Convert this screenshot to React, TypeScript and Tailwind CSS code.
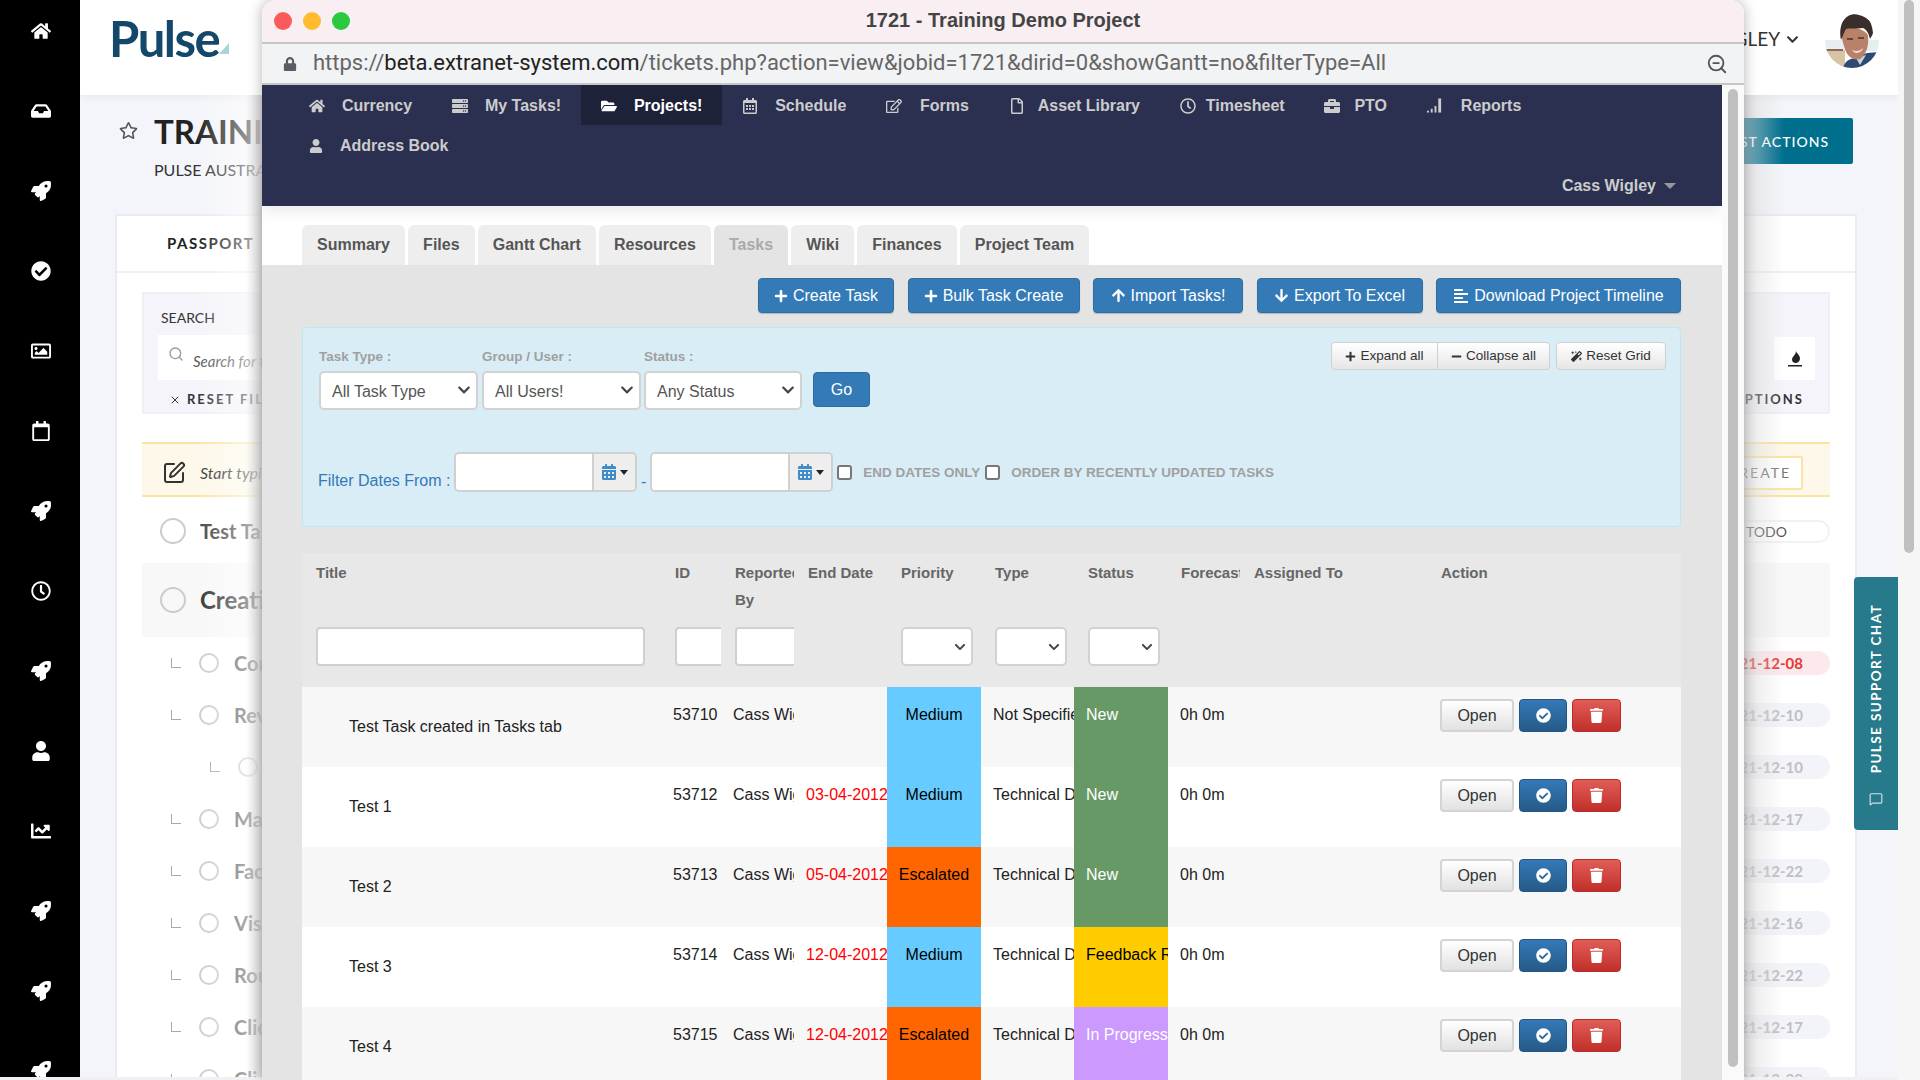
import {
  FaAlignLeft,
  FaArrowDown,
  FaArrowUp,
  FaBriefcase,
  FaCalendarAlt,
  FaChartLine,
  FaCheckCircle,
  FaChevronDown,
  FaFolderOpen,
  FaHome,
  FaInbox,
  FaLock,
  FaMagic,
  FaMinus,
  FaPlus,
  FaRegCalendar,
  FaRegCalendarAlt,
  FaRegClock,
  FaRegEdit,
  FaRegFile,
  FaRegImage,
  FaRegStar,
  FaRocket,
  FaServer,
  FaTrash,
  FaUser,
} from "react-icons/fa";
import { MessageSquare, Search, SquarePen, X, ZoomOut } from "lucide-react";
import type { ReactNode } from "react";

const sideIcons = [
  FaHome,
  FaInbox,
  FaRocket,
  FaCheckCircle,
  FaRegImage,
  FaRegCalendar,
  FaRocket,
  FaRegClock,
  FaRocket,
  FaUser,
  FaChartLine,
  FaRocket,
  FaRocket,
  FaRocket,
];

const subTasks = [
  { name: "Confirm", date: "2021-12-08", indent: false, late: true },
  { name: "Review", date: "2021-12-10", indent: false },
  { name: "Draft", date: "2021-12-10", indent: true },
  { name: "Map", date: "2021-12-17", indent: false },
  { name: "Facilitate", date: "2021-12-22", indent: false },
  { name: "Visit", date: "2021-12-16", indent: false },
  { name: "Route", date: "2021-12-22", indent: false },
  { name: "Client", date: "2021-12-17", indent: false },
  { name: "Client", date: "2021-12-29", indent: false },
];

const tabs = ["Summary", "Files", "Gantt Chart", "Resources", "Tasks", "Wiki", "Finances", "Project Team"];

const tasks = [
  { title: "Test Task created in Tasks tab", id: "53710", end: "", priority: "Medium", type: "Not Specified", status: "New" },
  { title: "Test 1", id: "53712", end: "03-04-2012", priority: "Medium", type: "Technical Design", status: "New" },
  { title: "Test 2", id: "53713", end: "05-04-2012", priority: "Escalated", type: "Technical Design", status: "New" },
  { title: "Test 3", id: "53714", end: "12-04-2012", priority: "Medium", type: "Technical Design", status: "Feedback Required" },
  { title: "Test 4", id: "53715", end: "12-04-2012", priority: "Escalated", type: "Technical Design", status: "In Progress" },
];

const priorityClass: Record<string, string> = {
  Medium: "bg-[#66ccff]",
  Escalated: "bg-[#ff6600]",
};

const statusClass: Record<string, string> = {
  New: "bg-[#669966] text-white",
  "Feedback Required": "bg-[#ffcc00] text-black",
  "In Progress": "bg-[#cc99ff] text-white",
};

const gridCols =
  "grid grid-cols-[359px_60px_73px_93px_94px_93px_94px_72px_187px_254px]";

function SignalIcon() {
  return (
    <svg width="17" height="17" viewBox="0 0 17 17" fill="currentColor">
      <rect x="0" y="14" width="2" height="2" />
      <rect x="4" y="12" width="2" height="4" />
      <rect x="8" y="9" width="2" height="7" />
      <rect x="12" y="1" width="3" height="15" />
    </svg>
  );
}

function Avatar() {
  return (
    <svg width="54" height="54" viewBox="0 0 54 54" className="rounded-full">
      <rect width="54" height="54" fill="#ffffff" />
      <rect x="0" y="26" width="54" height="11" fill="#e6eef2" />
      <rect x="0" y="36" width="20" height="18" fill="#d8c4a4" />
      <rect x="0" y="35" width="18" height="2" fill="#8c6a58" />
      <path d="M18 54c2-7 6-9 12-10l12-5 12-1v16z" fill="#2d4a70" />
      <path d="M31 44l4 7 6-10z" fill="#c9d3da" />
      <path d="M17 16c7-4 20-3 26 5 1 10-1 19-8 24-7 2-13-3-15-10-2-6-4-12-3-19z" fill="#b9806a" />
      <path d="M16 26C13 10 20 0 31 0c9 0 16 5 17 19-1 3-2 4-3 6-1-5-3-9-7-11-7 1-14 0-17 1-2 3-3 7-5 11z" fill="#3a2e2c" />
      <path d="M27 36c4 2 8 1 11-2-1 5-8 7-11 2z" fill="#f0dcd2" />
      <path d="M22 25h6M33 24h6" stroke="#40302c" strokeWidth="1.6" />
    </svg>
  );
}

function FlameIcon() {
  return (
    <svg width="14" height="16" viewBox="0 0 14 16" className="text-[#222]" fill="currentColor">
      <path d="M8 0c1 3 4 4 4 7.500 0 2.500-2 4.500-4.500 4.500-2 0-3.500-1.500-3.500-3.500 0-2 1.500-3 2.500-4.500C7 3 8 2 8 0z" />
      <rect x="0" y="14" width="14" height="1.500" />
    </svg>
  );
}

function BackgroundPage() {
  return (
    <div className="flex h-[1077px] w-[1898px] font-['Lato',sans-serif]">
      <aside className="flex h-full w-[80px] shrink-0 flex-col items-center overflow-hidden bg-black pl-[2px] text-white">
        <div className="-mt-[9px]">
          {sideIcons.map((Icon, i) => (
            <div key={i} className="flex h-[80px] items-center justify-center">
              <Icon className="size-[20px]" />
            </div>
          ))}
        </div>
      </aside>

      <main className="min-w-0 flex-1 overflow-hidden bg-[#f4f5fa]">
        <header className="flex h-[95px] items-center justify-between bg-white pl-[29px] pr-[19px] shadow-[0_2px_8px_rgba(0,0,0,0.06)]">
          <div className="mb-[18px] flex items-end">
            <span className="text-[49px] font-bold leading-none tracking-[-1.5px] text-[#14486a]">Pulse</span>
            <svg width="10" height="11" viewBox="0 0 10 11" className="mb-[9px]">
              <polygon points="10,0 10,11 0,11" fill="#a9d3d6" />
            </svg>
          </div>
          <div className="flex items-center gap-[6px]">
            <span className="mb-[16px] text-[19px] text-[#333]">CASS WIGLEY</span>
            <FaChevronDown className="mb-[16px] mr-[20px] size-[13px] text-[#333]" />
            <div className="mb-[14px]">
              <Avatar />
            </div>
          </div>
        </header>

        <section className="flex h-[119px] items-start justify-between pl-[39px] pr-[45px] pt-[23px]">
          <div className="flex">
            <FaRegStar className="mr-[16px] mt-[3px] size-[19px] text-[#555]" />
            <div>
              <h1 className="text-[33px] font-bold leading-[26px] text-[#222]">TRAINING DEMO PROJECT</h1>
              <p className="mt-[16px] text-[16px] leading-[20px] text-[#333]">PULSE AUSTRALIA</p>
            </div>
          </div>
          <button className="h-[46px] rounded-[2px] bg-[#006f8e] px-[24px] text-[14px] font-medium tracking-[1px] text-white">
            LATEST ACTIONS
          </button>
        </section>

        <section className="ml-[35px] h-[870px] w-[1742px] border-2 border-[#e9ebf3] bg-white">
          <div className="flex h-[57px] items-center border-b-2 border-[#eef0f5] pl-[50px]">
            <span className="text-[15px] font-bold tracking-[1.5px] text-[#222]">PASSPORT</span>
          </div>
          <div className="px-[25px] pt-[19px]">
            <div className="flex h-[122px] items-start justify-between border-2 border-[#efeff5] bg-[#f4f4fa] pl-[17px] pr-[24px] pt-[14px]">
              <div>
                <p className="text-[14px] leading-[20px] text-[#333]">SEARCH</p>
                <div className="mt-[7px] flex h-[45px] w-[500px] -translate-x-[3px] items-center bg-white pl-[10px]">
                  <Search className="mb-[8px] mr-[9px] size-[16px] text-[#999]" />
                  <span className="mt-[8px] text-[15px] italic text-[#555]">Search for tasks</span>
                </div>
                <p className="ml-[8px] mt-[10px] flex items-center text-[13px] font-bold tracking-[2px] text-[#333]">
                  <X className="mr-[6px] size-[12px]" /> RESET FILTERS
                </p>
              </div>
              <div className="flex flex-col items-end">
                <div className="mr-[-11px] mt-[29px] flex h-[43px] w-[41px] items-center justify-center bg-white">
                  <FlameIcon />
                </div>
                <span className="mt-[10px] text-[13px] font-bold tracking-[2px] text-[#333]">OPTIONS</span>
              </div>
            </div>

            <div className="mt-[28px] flex h-[55px] items-center justify-between border-y-2 border-[#fbe4a3] bg-[#fdf8ea] pl-[20px] pr-[27px]">
              <div className="flex items-center pt-[7px]">
                <SquarePen className="mr-[14px] size-[24px] text-[#333]" />
                <span className="text-[16px] italic text-[#333]">Start typing to add a task</span>
              </div>
              <span className="mt-[6px] flex h-[34px] items-center rounded-[2px] border-2 border-[#fbe4a3] bg-white pl-[20px] pr-[10px] text-[14px] tracking-[2px] text-[#777]">
                CREATE
              </span>
            </div>

            <div className="flex h-[66px] items-center justify-between pl-[18px] pt-[2px]">
              <div className="flex items-center">
                <span className="mr-[14px] size-[26px] rounded-full border-2 border-[#ccc]" />
                <span className="text-[20px] font-bold text-[#444]">Test Task</span>
              </div>
              <span className="flex h-[23px] w-[100px] items-center rounded-full border-2 border-[#f2f2f2] pl-[14px] text-[14px] text-[#555]">
                TODO
              </span>
            </div>

            <div className="flex h-[74px] items-center bg-[#f8f8f8] pl-[18px]">
              <span className="mr-[14px] size-[26px] rounded-full border-2 border-[#ccc]" />
              <span className="text-[24px] font-bold text-[#333]">Creating the project</span>
            </div>

            {subTasks.map((t, i) => (
              <div key={i} className="flex h-[52px] items-center justify-between">
                <div className={`flex items-center ${t.indent ? "pl-[68px]" : "pl-[29px]"}`}>
                  <span className="mr-[18px] h-[10px] w-[10px] border-b border-l border-[#aaa]" />
                  <span className="mr-[15px] size-[20px] rounded-full border-2 border-[#ccc]" />
                  <span className="text-[20px] font-bold text-[#555]">{t.indent ? "" : t.name}</span>
                </div>
                <span
                  className={`flex h-[24px] w-[140px] items-center justify-end rounded-full pr-[27px] text-[15px] font-bold ${
                    t.late ? "bg-[#fbe9ec] text-[#e53935]" : "bg-[#f3f3fa] text-[#c0c0c0]"
                  }`}
                >
                  {t.date}
                </span>
              </div>
            ))}
          </div>
        </section>
      </main>
    </div>
  );
}

function TopButton({ icon, label, width }: { icon: ReactNode; label: string; width: string }) {
  return (
    <button
      className={`flex h-[35px] items-center justify-center gap-[5px] rounded-[4px] border border-[#2e6da4] bg-[#337ab7] text-[16px] text-white shadow-[0_1px_1px_rgba(0,0,0,0.2)] ${width}`}
    >
      {icon}
      {label}
    </button>
  );
}

function SelectBox({ label, width, big }: { label?: string; width: string; big?: boolean }) {
  return (
    <div className={`relative h-[39px] shrink-0 ${width}`}>
      <select
        defaultValue=""
        className="h-full w-full appearance-none rounded-[5px] border-2 border-[#d2d2d2] bg-white pl-[11px] pt-[2px] text-[16px] text-[#555]"
      >
        <option value="">{label}</option>
      </select>
      <FaChevronDown
        className={`pointer-events-none absolute right-[7px] text-[#444] ${big ? "top-[12px] size-[14px]" : "top-[14px] size-[12px]"}`}
      />
    </div>
  );
}

function DateInput() {
  return (
    <div className="flex h-[40px] shrink-0 overflow-hidden rounded-[5px] border-2 border-[#d0d0d0]">
      <div className="w-[136px] bg-white" />
      <div className="flex w-[43px] items-center justify-center gap-[3px] border-l-2 border-[#d0d0d0] bg-[#eeeeee]">
        <FaCalendarAlt className="size-[16px] text-[#428bca]" />
        <span className="h-0 w-0 border-x-[4px] border-t-[5px] border-x-transparent border-t-[#222]" />
      </div>
    </div>
  );
}

function GreyButton({ children, className }: { children: ReactNode; className?: string }) {
  return (
    <button
      className={`flex h-[28px] items-center justify-center gap-[4px] border border-[#d0d0d0] bg-gradient-to-b from-white to-[#e6e6e6] text-[13.5px] text-[#333] ${className}`}
    >
      {children}
    </button>
  );
}

function TaskRow({ task, index }: { task: (typeof tasks)[number]; index: number }) {
  return (
    <div
      className={`${gridCols} h-[80px] shrink-0 text-[16px] leading-[24px] text-[#222] ${index % 2 === 0 ? "bg-[#f7f7f7]" : "bg-white"}`}
    >
      <div className="flex items-center pl-[47px]">{task.title}</div>
      <div className="px-[12px] pt-[16px]">{task.id}</div>
      <div className="overflow-hidden whitespace-nowrap pl-[12px] pt-[16px]">Cass Wigley</div>
      <div className="overflow-hidden whitespace-nowrap pl-[12px] pt-[16px] text-[#ff0000]">{task.end}</div>
      <div className={`pt-[16px] text-center text-black ${priorityClass[task.priority]}`}>{task.priority}</div>
      <div className="overflow-hidden whitespace-nowrap pl-[12px] pt-[16px]">{task.type}</div>
      <div className={`overflow-hidden whitespace-nowrap pl-[12px] pt-[16px] ${statusClass[task.status]}`}>{task.status}</div>
      <div className="pl-[12px] pt-[16px]">0h 0m</div>
      <div />
      <div className="flex items-start gap-[5px] pl-[13px] pt-[12px]">
        <button className="h-[33px] w-[74px] rounded-[4px] border-2 border-[#d4d4d4] bg-gradient-to-b from-white to-[#e2e2e2] text-[#333]">
          Open
        </button>
        <button className="flex h-[33px] w-[48px] items-center justify-center rounded-[4px] border border-[#245580] bg-gradient-to-b from-[#337ab7] to-[#265a88] text-white">
          <FaCheckCircle className="size-[15px]" />
        </button>
        <button className="flex h-[33px] w-[49px] items-center justify-center rounded-[4px] border border-[#b92c28] bg-gradient-to-b from-[#e25c58] to-[#c12e2a] text-white">
          <FaTrash className="size-[15px]" />
        </button>
      </div>
    </div>
  );
}

const navFirstRow = [
  { Icon: FaHome, label: "Currency", gap: "mr-[17px]" },
  { Icon: FaServer, label: "My Tasks!", gap: "mr-[17px]" },
  { Icon: FaFolderOpen, label: "Projects!", gap: "mr-[17px]", active: true },
  { Icon: FaRegCalendarAlt, label: "Schedule", gap: "mr-[17px]" },
  { Icon: FaRegEdit, label: "Forms", gap: "mr-[18px]" },
  { Icon: FaRegFile, label: "Asset Library", gap: "mr-[13px]" },
  { Icon: FaRegClock, label: "Timesheet", gap: "mr-[10px]" },
  { Icon: FaBriefcase, label: "PTO", gap: "mr-[14px]" },
  { Icon: SignalIcon, label: "Reports", gap: "mr-[18px]" },
];

function BrowserWindow() {
  return (
    <div className="absolute left-[262px] top-0 flex h-[1080px] w-[1482px] flex-col overflow-hidden rounded-t-[14px] bg-white font-['Liberation_Sans',sans-serif] shadow-[0_0_14px_rgba(0,0,0,0.3)]">
      <div className="relative flex h-[42px] shrink-0 items-center justify-center bg-[#f9eef2] pb-[2px]">
        <div className="absolute left-[12px] top-[12px] flex gap-[11px]">
          <span className="size-[18px] rounded-full bg-[#fc5a5a]" />
          <span className="size-[18px] rounded-full bg-[#fdbc2d]" />
          <span className="size-[18px] rounded-full bg-[#2ac940]" />
        </div>
        <span className="text-[20px] font-bold text-[#444]">1721 - Training Demo Project</span>
      </div>
      <div className="flex h-[43px] shrink-0 items-center border-y-2 border-[#c6c6c6] bg-[#f2f3f5] pl-[21px] pr-[16px]">
        <FaLock className="mr-[16px] size-[14px] text-[#5c5c66]" />
        <span className="-mt-[2px] font-['Roboto',sans-serif] text-[22px] text-[#666]">
          https://<span className="text-[#222]">beta.extranet-system.com</span>
          /tickets.php?action=view&amp;jobid=1721&amp;dirid=0&amp;showGantt=no&amp;filterType=All
        </span>
        <ZoomOut className="ml-auto size-[22px] text-[#555]" />
      </div>

      <div className="flex min-h-0 flex-1">
        <div className="w-[1460px] shrink-0 overflow-hidden">
          <nav className="h-[121px] bg-[#2b3050] text-[16px] font-bold text-[#cccccc] shadow-[0_6px_14px_rgba(0,0,0,0.08)]">
            <div className="flex h-[40px] pl-[27px]">
              {navFirstRow.map(({ Icon, label, active, gap }) => (
                <div
                  key={label}
                  className={`flex items-center px-[19.900px] pt-[1px] ${active ? "bg-[#1e2238] text-white" : ""}`}
                >
                  <span className={`flex w-[16px] justify-center ${gap}`}>
                    <Icon className="size-[16px]" />
                  </span>
                  {label}
                </div>
              ))}
            </div>
            <div className="flex h-[40px] items-center pl-[47px] pt-[1px]">
              <FaUser className="mr-[17px] size-[14px]" />
              Address Book
            </div>
            <div className="flex h-[41px] items-center justify-end gap-[8px] pr-[46px]">
              Cass Wigley
              <span className="h-0 w-0 border-x-[6px] border-t-[6px] border-x-transparent border-t-[#999]" />
            </div>
          </nav>

          <div className="flex h-[59px] items-end gap-[3.2px] pl-[40px]">
            {tabs.map((tab) => (
              <div
                key={tab}
                className={`flex h-[40px] items-center rounded-t-[6px] px-[15px] text-[16px] font-bold ${
                  tab === "Tasks" ? "bg-[#e4e4e4] text-[#aaaaaa]" : "bg-[#eeeeee] text-[#555555]"
                }`}
              >
                {tab}
              </div>
            ))}
          </div>

          <div className="h-[815px] overflow-hidden bg-[#e4e4e4] pl-[40px]">
            <div className="w-[1379px]">
              <div className="flex justify-end gap-[13.500px] pt-[13px]">
                <TopButton width="w-[136px]" icon={<FaPlus className="size-[14px]" />} label="Create Task" />
                <TopButton width="w-[172px]" icon={<FaPlus className="size-[14px]" />} label="Bulk Task Create" />
                <TopButton width="w-[150px]" icon={<FaArrowUp className="size-[15px]" />} label="Import Tasks!" />
                <TopButton width="w-[166px]" icon={<FaArrowDown className="size-[15px]" />} label="Export To Excel" />
                <TopButton width="w-[245px]" icon={<FaAlignLeft className="size-[16px]" />} label="Download Project Timeline" />
              </div>

              <div className="mt-[14px] h-[200px] rounded-[4px] border border-[#bce8f1] bg-[#d9edf7] pl-[15px] pr-[14px] pt-[14px]">
                <div className="flex items-start justify-between">
                  <div className="flex pt-[6px]">
                    <div className="ml-px mr-[4px]">
                      <p className="mb-[5px] h-[18px] text-[13.5px] font-bold leading-[18px] text-[#a0a0a0]">Task Type :</p>
                      <SelectBox label="All Task Type" width="w-[159px]" big />
                    </div>
                    <div className="mr-[3px]">
                      <p className="mb-[5px] h-[18px] text-[13.5px] font-bold leading-[18px] text-[#a0a0a0]">Group / User :</p>
                      <SelectBox label="All Users!" width="w-[159px]" big />
                    </div>
                    <div className="mr-[11px]">
                      <p className="mb-[5px] h-[18px] text-[13.5px] font-bold leading-[18px] text-[#a0a0a0]">Status :</p>
                      <SelectBox label="Any Status" width="w-[158px]" big />
                    </div>
                    <button className="mt-[24px] h-[35px] w-[57px] rounded-[4px] border border-[#2e6da4] bg-[#337ab7] text-[16px] text-white">
                      Go
                    </button>
                  </div>
                  <div className="flex">
                    <GreyButton className="w-[107px] rounded-l-[4px]">
                      <FaPlus className="size-[11px]" /> Expand all
                    </GreyButton>
                    <GreyButton className="w-[112px] rounded-r-[4px] border-l-0">
                      <FaMinus className="size-[11px]" /> Collapse all
                    </GreyButton>
                    <GreyButton className="ml-[6px] w-[110px] rounded-[4px]">
                      <FaMagic className="size-[11px]" /> Reset Grid
                    </GreyButton>
                  </div>
                </div>

                <div className="mt-[42px] flex items-start">
                  <label className="mr-[5px] mt-[18px] w-[131px] whitespace-nowrap text-[16px] leading-[22px] text-[#337ab7]">Filter Dates From :</label>
                  <DateInput />
                  <span className="mx-[4px] mt-[19px] text-[16px] leading-[22px] text-[#337ab7]">-</span>
                  <DateInput />
                  <input type="checkbox" className="ml-[4px] mr-[11px] mt-[13px] size-[15px] appearance-none rounded-[3px] border-2 border-[#777] bg-white" />
                  <span className="mt-[12px] text-[13.5px] font-bold leading-[18px] text-[#a0a0a0]">END DATES ONLY</span>
                  <input type="checkbox" className="ml-[5px] mr-[11px] mt-[13px] size-[15px] appearance-none rounded-[3px] border-2 border-[#777] bg-white" />
                  <span className="mt-[12px] text-[13.5px] font-bold leading-[18px] text-[#a0a0a0]">ORDER BY RECENTLY UPDATED TASKS</span>
                </div>
              </div>

              <div className="mt-[26px]">
                <div className={`${gridCols} h-[134px] bg-[#e8e8e8] pt-[6px] text-[15px] font-bold leading-[27px] text-[#666]`}>
                  <div className="px-[14px]">
                    <div className="h-[68px]">Title</div>
                    <input className="h-[39px] w-[329px] rounded-[4px] border-2 border-[#d0d0d0] bg-white" />
                  </div>
                  <div className="overflow-hidden pl-[14px]">
                    <div className="h-[68px]">ID</div>
                    <input className="h-[39px] w-[70px] rounded-[4px] border-2 border-[#d0d0d0] bg-white" />
                  </div>
                  <div className="overflow-hidden pl-[14px]">
                    <div className="h-[68px]">Reported By</div>
                    <input className="h-[39px] w-[70px] rounded-[4px] border-2 border-[#d0d0d0] bg-white" />
                  </div>
                  <div className="pl-[14px]">End Date</div>
                  <div className="pl-[14px]">
                    <div className="h-[68px]">Priority</div>
                    <SelectBox width="w-[72px]" />
                  </div>
                  <div className="pl-[14px]">
                    <div className="h-[68px]">Type</div>
                    <SelectBox width="w-[72px]" />
                  </div>
                  <div className="pl-[14px]">
                    <div className="h-[68px]">Status</div>
                    <SelectBox width="w-[72px]" />
                  </div>
                  <div className="overflow-hidden whitespace-nowrap pl-[13px]">Forecast</div>
                  <div className="pl-[14px]">Assigned To</div>
                  <div className="pl-[14px]">Action</div>
                </div>
                {tasks.map((task, i) => (
                  <TaskRow key={task.id} task={task} index={i} />
                ))}
              </div>
            </div>
          </div>
        </div>

        <div className="flex-1 bg-[#fafafa] px-[6px] pt-[4px]">
          <div className="h-[978px] rounded-full bg-[#c0c0c0]" />
        </div>
      </div>
    </div>
  );
}

export default function App() {
  return (
    <div className="relative h-[1080px] w-[1920px] overflow-hidden bg-[#f1f1f3]">
      <BackgroundPage />

      {/* blur of the page that shows around the window */}
      <div className="absolute left-[196px] top-[95px] h-[982px] w-[66px] bg-gradient-to-r from-transparent via-white/50 via-75% to-[#d8d8d8]/90" />
      <div className="absolute left-[1744px] top-[95px] h-[982px] w-[40px] bg-gradient-to-r from-[#d8d8d8]/60 to-transparent" />

      <BrowserWindow />

      <div className="absolute left-[1854px] top-[577px] flex h-[253px] w-[44px] flex-col items-center justify-between rounded-l-[4px] bg-[#277a8c] pb-[24px] pt-[27px] text-white">
        <span className="rotate-180 font-['Lato',sans-serif] text-[13.5px] font-bold tracking-[1.4px] [writing-mode:vertical-rl]">
          PULSE SUPPORT CHAT
        </span>
        <MessageSquare className="size-[14px] text-[#cfe3e8]" />
      </div>

      <div className="absolute right-0 top-0 h-[1080px] w-[22px] bg-[#f6f6f6] px-[6px]">
        <div className="h-[553px] rounded-full bg-[#c0c0c0]" />
      </div>
    </div>
  );
}
